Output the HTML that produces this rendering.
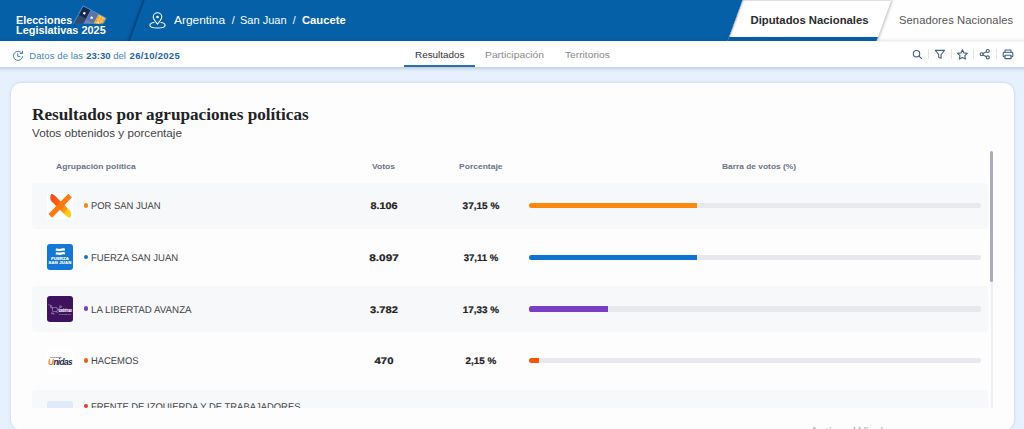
<!DOCTYPE html>
<html lang="es">
<head>
<meta charset="utf-8">
<title>Elecciones Legislativas 2025</title>
<style>
*{box-sizing:border-box;margin:0;padding:0}
html,body{width:1024px;height:429px;overflow:hidden}
body{background:#e7f1fd;font-family:"Liberation Sans",sans-serif;position:relative;color:#333}
.abs{position:absolute;white-space:nowrap;line-height:1}
#top{position:absolute;left:0;top:0;width:1024px;height:41px;background:#0560a8;overflow:hidden}
#top .skew{position:absolute;left:137px;top:-4px;width:700px;height:50px;background:#0560a8;transform:skewX(-20deg);box-shadow:-1.5px 0 2.5px rgba(0,25,60,.5)}
#tabs{position:absolute;left:700px;top:0;width:324px;height:41px;overflow:hidden}
#tabs .sen{position:absolute;left:150px;top:0;width:200px;height:41px;background:#fefefe}
#tabs .dip{position:absolute;left:34.6px;top:0;width:149.4px;height:41px;background:#fff;transform:skewX(-20deg);border-bottom:4px solid #0560a8;box-shadow:1px 0 3px rgba(0,0,0,.28),inset 2px 0 2px -1px rgba(0,0,0,.3),inset 0 1px 0 #e4e4e4}
#sub{position:absolute;left:0;top:41px;width:1024px;height:26px;background:#fff}
#subsh{position:absolute;left:-12px;top:41px;width:1048px;height:26px;background:#fff;box-shadow:0 1px 4px rgba(40,60,95,.3)}
#card{position:absolute;left:11px;top:83px;width:1003px;height:347px;background:#fdfdfe;border-radius:10px;box-shadow:0 0 3px rgba(90,120,170,.32)}
.stripe{position:absolute;left:32px;width:956px;height:46px;background:#f6f8fa;border-radius:4px}
.logo{position:absolute;left:47px;width:26.2px;height:26.200px;border-radius:3px;overflow:hidden}
.dot{position:absolute;left:83.5px;width:4.5px;height:4.5px;border-radius:50%}
.track{position:absolute;left:529px;width:451.5px;height:5.3px;background:#e8e9ed;border-radius:2.6px;overflow:hidden}
.fill{position:absolute;left:0;top:0;height:100%}
#list{position:absolute;left:0;top:150px;width:1024px;height:257.5px;overflow:hidden}
.vd{position:absolute;top:8px;width:1px;height:10px;background:#dfe3ea}
</style>
</head>
<body>
<div id="top">
<div class="skew"></div>
<div class="abs" style="top:16px;font-size:10.1px;color:#fff;left:16.00px;font-weight:bold;transform:translateY(0px) scale(1.065,1);transform-origin:left 80%;">Elecciones</div>
<div class="abs" style="top:26px;font-size:10.1px;color:#fff;left:16.00px;font-weight:bold;transform:translateY(0px) scale(1.08,1);transform-origin:left 80%;">Legislativas 2025</div>
<svg class="abs" style="left:70px;top:0" width="40" height="28" viewBox="70 0 40 28">
<defs><clipPath id="bc"><rect x="70" y="0" width="40" height="23.5"/></clipPath></defs>
<g clip-path="url(#bc)"><g transform="translate(83,5.200) rotate(28.300)">
<rect x="0" y="0" width="27" height="24" fill="#4a92dd"/>
<rect x=".9" y=".9" width="8.100" height="24" fill="#13284a"/>
<rect x="9.500" y=".9" width="8.100" height="24" fill="#5d74a3"/>
<rect x="18.100" y=".9" width="8" height="24" fill="#f5b53c"/>
<rect x=".9" y="10.500" width="8.100" height="14" fill="#4a5f86" opacity=".6"/>
<rect x="9.500" y="11" width="8.100" height="14" fill="#7f92bd" opacity=".6"/>
<rect x="18.100" y="3" width="8" height="1.200" fill="#f08a1e"/><rect x="18.100" y="6.500" width="8" height="1.200" fill="#f08a1e"/><rect x="18.100" y="10" width="8" height="1.200" fill="#f08a1e"/>
<rect x="20.300" y=".9" width="1" height="12" fill="#f9d27a"/><rect x="23.100" y=".9" width="1" height="12" fill="#f9d27a"/>
<rect x="3.800" y="5.300" width="2.300" height="2.300" fill="#f2f5fb"/>
<rect x="12.400" y="5.800" width="2.300" height="2.300" fill="#f2f5fb"/>
<rect x="21.200" y="7.500" width="1.800" height="1.800" fill="#fff6d8"/>
</g></g>
<path d="M76 24.300h6M99.500 24.300h4" stroke="#1f6fc4" stroke-width=".8" stroke-dasharray="1 .7"/>
</svg>
<svg class="abs" style="left:149px;top:11px" width="17" height="18" viewBox="0 0 17 18" fill="none" stroke="#fff" stroke-width="1.050" stroke-linecap="round" stroke-linejoin="round">
<path d="M8.500 13.100C5.800 10 4.200 8 4.200 6.100a4.300 4.300 0 0 1 8.600 0C12.800 8 11.200 10 8.500 13.100z"/>
<circle cx="8.500" cy="6" r=".800" fill="#fff"/>
<path d="M5 11.600C2.600 12 .9 13 .9 14.200c0 1.600 3.400 2.800 7.600 2.800s7.600-1.200 7.600-2.800c0-1.200-1.700-2.200-4.100-2.600"/>
</svg>
<div class="abs" style="top:15px;font-size:10.5px;color:#fff;left:174.20px;transform:translateY(0px) scale(1.135,1);transform-origin:left 80%;">Argentina</div>
<div class="abs" style="top:15px;font-size:10.5px;color:#fff;left:231.80px;">/</div>
<div class="abs" style="top:15px;font-size:10.5px;color:#fff;left:240.20px;transform:translateY(0px) scale(1.05,1);transform-origin:left 80%;">San Juan</div>
<div class="abs" style="top:15px;font-size:10.5px;color:#fff;left:292.80px;">/</div>
<div class="abs" style="top:15px;font-size:10.5px;color:#fff;left:301.50px;font-weight:bold;transform:translateY(0px) scale(1.07,1);transform-origin:left 80%;">Caucete</div>
</div>
<div id="tabs">
<div class="sen"></div>
<div class="dip"></div>
<div class="abs" style="top:15px;font-size:11.3px;color:#2b2b2b;left:50.50px;font-weight:bold;">Diputados Nacionales</div>
<div class="abs" style="top:15px;font-size:11.2px;color:#555;left:199.00px;letter-spacing:0.08px;">Senadores Nacionales</div>
</div>
<div id="subsh"></div>
<div id="sub">
<div class="abs" style="left:876px;top:0;width:148px;height:1px;background:#f5f5f5"></div>
<svg class="abs" style="left:12px;top:9px" width="12" height="12" viewBox="0 0 12 12" fill="none" stroke="#3f7fbd" stroke-width="1" stroke-linecap="round" stroke-linejoin="round">
<path d="M9.8 3.2A4.600 4.600 0 1 0 10.600 6.500"/><path d="M10.500 1.200v2.300H8.200"/><path d="M5.700 3.600v2.800h2.200"/></svg>
<div class="abs" style="top:10px;font-size:9.5px;color:#4583bf;left:29.20px;letter-spacing:0.1px;">Datos de las</div>
<div class="abs" style="top:10px;font-size:9.5px;color:#2463a5;left:86.30px;letter-spacing:-0.02px;font-weight:bold;">23:30</div>
<div class="abs" style="top:10px;font-size:9.5px;color:#4583bf;left:113.30px;">del</div>
<div class="abs" style="top:10px;font-size:9.5px;color:#2463a5;left:129.60px;letter-spacing:0.28px;font-weight:bold;">26/10/2025</div>
<div class="abs" style="top:9px;font-size:9.6px;color:#333;left:415.00px;transform:translateY(0px) scale(1.03,1);transform-origin:left 80%;">Resultados</div>
<div class="abs" style="left:404px;top:24px;width:71px;height:2px;background:#2a6db3"></div>
<div class="abs" style="top:9px;font-size:9.6px;color:#8a8a8a;left:484.90px;transform:translateY(0px) scale(1.075,1);transform-origin:left 80%;">Participación</div>
<div class="abs" style="top:9px;font-size:9.6px;color:#8a8a8a;left:565.30px;transform:translateY(0px) scale(1.065,1);transform-origin:left 80%;">Territorios</div>
<svg class="abs" style="left:910px;top:7px" width="106" height="14" viewBox="910 48 106 14" fill="none" stroke="#46607f" stroke-width="1.1" stroke-linecap="round" stroke-linejoin="round">
<circle cx="916.5" cy="53.7" r="3.2"/><path d="M918.9 56.100L921.600 58.500"/>
<path d="M935.300 50.400h9.200l-3.400 4.100v3.700l-2.400-1v-2.700z"/>
<path d="M962.400 49.800l1.500 3.100 3.400.45-2.500 2.350.65 3.350-3.050-1.650-3.050 1.650.65-3.350-2.500-2.350 3.400-.45z"/>
<circle cx="987.800" cy="51" r="1.500"/><circle cx="987.800" cy="57.400" r="1.500"/><circle cx="981.700" cy="54.200" r="1.500"/><path d="M983 53.500l3.500-1.800M983 54.900l3.500 1.800"/>
<path d="M1005 52.300v-2.300h6v2.300"/><rect x="1003.200" y="52.300" width="9.600" height="4.400" rx="1"/><rect x="1005" y="55.200" width="6" height="3.400" fill="#fff"/>
</svg>
<div class="vd" style="left:928px"></div>
<div class="vd" style="left:951px"></div>
<div class="vd" style="left:973px"></div>
<div class="vd" style="left:996px"></div>
</div>
<div id="card"></div>
<div class="abs" style="top:107px;font-size:16.3px;color:#222;left:32.00px;font-weight:bold;font-family:'Liberation Serif',serif;transform:translateY(0px) scale(1.054,1);transform-origin:left 80%;">Resultados por agrupaciones políticas</div>
<div class="abs" style="top:128px;font-size:10.5px;color:#444;left:32.00px;transform:translateY(0px) scale(1.112,1);transform-origin:left 80%;">Votos obtenidos y porcentaje</div>
<div class="abs" style="top:163px;font-size:8px;color:#6b7388;left:56.00px;font-weight:bold;transform:translateY(0px) scale(1.068,1);transform-origin:left 80%;">Agrupación política</div>
<div class="abs" style="top:163px;font-size:8px;color:#6b7388;left:372.00px;font-weight:bold;transform:translateY(0px) scale(1.065,1);transform-origin:left 80%;">Votos</div>
<div class="abs" style="top:163px;font-size:8px;color:#6b7388;left:458.60px;font-weight:bold;transform:translateY(0px) scale(1.064,1);transform-origin:left 80%;">Porcentaje</div>
<div class="abs" style="top:163px;font-size:8px;color:#6b7388;left:722.00px;font-weight:bold;transform:translateY(0px) scale(1.047,1);transform-origin:left 80%;">Barra de votos (%)</div>
<div id="list">
<div class="stripe" style="top:32.7px"></div>
<div class="stripe" style="top:136.1px"></div>
<div class="stripe" style="top:239.5px"></div>
<div class="logo" style="top:42.50px;background:#fff"><svg width="26" height="26" viewBox="0 0 26 26"><defs><linearGradient id="g1" x1="0" y1="0" x2="1" y2="1"><stop offset="0" stop-color="#ff3d1f"/><stop offset=".5" stop-color="#ff7014"/><stop offset=".7" stop-color="#ff9a18"/><stop offset=".74" stop-color="#ffc61a"/><stop offset="1" stop-color="#ffd61a"/></linearGradient></defs>
<g transform="translate(13.2,12.900) scale(1.140) translate(-13,-12.600)"><path d="M5.300 2c1.700.6 3 1.500 4.300 2.800L21.500 16.600c1.200 1.300 1.700 3.900.2 6.700-1.800-.6-3.200-1.500-4.400-2.700L5.500 8.800C4.200 7.500 3.800 4.600 5.300 2z" fill="url(#g1)"/>
<path d="M20.100 2l3.200 3.200L5.900 23l-3.200-3.200z" fill="#ff7a12"/></g></svg></div>
<div class="dot" style="top:53.00px;background:#ef8a1d"></div>
<div class="abs" style="top:51px;font-size:9.8px;color:#444;left:90.50px;transform:translateY(1.2px) scale(0.962,1);transform-origin:left 80%;text-rendering:geometricPrecision;">POR SAN JUAN</div>
<div class="abs" style="top:51px;font-size:9.5px;color:#222;left:283.50px;width:200px;text-align:center;font-weight:bold;transform:translateY(1.1px) scale(1.14,1);transform-origin:center 80%;text-rendering:geometricPrecision;-webkit-text-stroke:.2px #222;">8.106</div>
<div class="abs" style="top:51px;font-size:9.5px;color:#222;left:380.50px;width:200px;text-align:center;font-weight:bold;transform:translateY(1.1px) scale(1.055,1);transform-origin:center 80%;text-rendering:geometricPrecision;-webkit-text-stroke:.2px #222;">37,15 %</div>
<div class="track" style="top:53.00px"><div class="fill" style="width:168px;background:#fb890e"></div></div>
<div class="logo" style="top:94.20px;background:#1577d3"><svg width="26" height="26" viewBox="0 0 26 26"><path d="M8.800 4.700c1.500-.8 3.100.5 4.600.1s3.100-1 4.500-.2v2.300c-1.400-.8-3-.2-4.500.2s-3.100-.9-4.600-.1zM8.800 8.500c1.500-.8 3.100.5 4.600.1s3.100-1 4.500-.2v2.300c-1.400-.8-3-.2-4.500.2s-3.100-.9-4.600-.1z" fill="#fff"/>
<text x="13" y="15.900" font-family="Liberation Sans,sans-serif" font-weight="bold" font-size="4.200" fill="#fff" stroke="#fff" stroke-width=".15" text-anchor="middle" letter-spacing=".15">FUERZA</text>
<text x="13" y="20.300" font-family="Liberation Sans,sans-serif" font-weight="bold" font-size="4.200" fill="#fff" stroke="#fff" stroke-width=".15" text-anchor="middle" letter-spacing=".2">SAN JUAN</text></svg></div>
<div class="dot" style="top:104.70px;background:#1273c9"></div>
<div class="abs" style="top:103px;font-size:9.8px;color:#444;left:90.50px;transform:translateY(1.2px) scale(0.97,1);transform-origin:left 80%;text-rendering:geometricPrecision;">FUERZA SAN JUAN</div>
<div class="abs" style="top:103px;font-size:9.5px;color:#222;left:283.50px;width:200px;text-align:center;font-weight:bold;transform:translateY(1.1px) scale(1.24,1);transform-origin:center 80%;text-rendering:geometricPrecision;-webkit-text-stroke:.2px #222;">8.097</div>
<div class="abs" style="top:103px;font-size:9.5px;color:#222;left:380.50px;width:200px;text-align:center;font-weight:bold;transform:translateY(1.1px) scale(1.01,1);transform-origin:center 80%;text-rendering:geometricPrecision;-webkit-text-stroke:.2px #222;">37,11 %</div>
<div class="track" style="top:104.70px"><div class="fill" style="width:168px;background:#0f73cf"></div></div>
<div class="logo" style="top:145.90px;background:#3e125c"><svg width="26.2" height="26.2" viewBox="0 0 26 26"><g fill="none" stroke="#cdbbe0" stroke-width=".5" stroke-linecap="round" stroke-linejoin="round"><path d="M1.600 8.600l2.600 1 1.300 2.200 2.300-.5 2.300.4 1.800 1.900.9 2.300"/><path d="M5.500 11.800l-.3 2.300 1.200 1.300 2.500.2 1.700-1.200-.6-1.900"/><path d="M4.200 9.600l-1.100 1.600 2.100.9M5.200 15.600l-.7 2.300 2-.9.600 1.400M9 15.600l1.800.800M11.900 13.600l1-2.300 1.800-.6M12.900 11.300l-.3-1.600 1.500.4"/></g>
<text x="16" y="13.300" textLength="3.500" lengthAdjust="spacing" font-family="Liberation Sans,sans-serif" font-weight="bold" font-size="2" fill="#e6dcef">LA</text>
<text x="11.600" y="16.300" textLength="13.200" lengthAdjust="spacing" font-family="Liberation Sans,sans-serif" font-weight="bold" font-size="2.600" fill="#f1ebf6" stroke="#f1ebf6" stroke-width=".15">LIBERTAD</text>
<text x="12" y="18.900" textLength="11.900" lengthAdjust="spacing" font-family="Liberation Sans,sans-serif" font-weight="bold" font-size="2" fill="#b49dca" stroke="#b49dca" stroke-width=".1">AVANZA</text></svg></div>
<div class="dot" style="top:156.40px;background:#7b3fc0"></div>
<div class="abs" style="top:155px;font-size:9.8px;color:#444;left:90.50px;transform:translateY(1.2px) scale(0.995,1);transform-origin:left 80%;text-rendering:geometricPrecision;">LA LIBERTAD AVANZA</div>
<div class="abs" style="top:155px;font-size:9.5px;color:#222;left:283.50px;width:200px;text-align:center;font-weight:bold;transform:translateY(1.1px) scale(1.17,1);transform-origin:center 80%;text-rendering:geometricPrecision;-webkit-text-stroke:.2px #222;">3.782</div>
<div class="abs" style="top:155px;font-size:9.5px;color:#222;left:380.50px;width:200px;text-align:center;font-weight:bold;transform:translateY(1.1px) scale(1.04,1);transform-origin:center 80%;text-rendering:geometricPrecision;-webkit-text-stroke:.2px #222;">17,33 %</div>
<div class="track" style="top:156.40px"><div class="fill" style="width:78.5px;background:#7a3fc2"></div></div>
<div class="logo" style="top:197.60px;background:#fff"><svg width="26" height="26" viewBox="0 0 26 26"><defs><linearGradient id="g4" x1="0" y1="0" x2="1" y2="1"><stop offset="0" stop-color="#f7a21b"/><stop offset=".6" stop-color="#ee4a1e"/><stop offset="1" stop-color="#c2185b"/></linearGradient></defs>
<text x="3" y="9.700" font-family="Liberation Sans,sans-serif" font-weight="bold" font-size="2.300" fill="#3a3f55">Provincias</text>
<text x="1" y="16.600" font-family="Liberation Sans,sans-serif" font-weight="bold" font-style="italic" font-size="8.200" letter-spacing="-.55" fill="#1d2545"><tspan fill="url(#g4)">U</tspan>nidas</text></svg></div>
<div class="dot" style="top:208.10px;background:#f0601a"></div>
<div class="abs" style="top:206px;font-size:9.8px;color:#444;left:90.50px;transform:translateY(1.2px) scale(0.958,1);transform-origin:left 80%;text-rendering:geometricPrecision;">HACEMOS</div>
<div class="abs" style="top:206px;font-size:9.5px;color:#222;left:283.50px;width:200px;text-align:center;font-weight:bold;transform:translateY(1.1px) scale(1.19,1);transform-origin:center 80%;text-rendering:geometricPrecision;-webkit-text-stroke:.2px #222;">470</div>
<div class="abs" style="top:206px;font-size:9.5px;color:#222;left:380.50px;width:200px;text-align:center;font-weight:bold;transform:translateY(1.1px) scale(1.04,1);transform-origin:center 80%;text-rendering:geometricPrecision;-webkit-text-stroke:.2px #222;">2,15 %</div>
<div class="track" style="top:208.10px"><div class="fill" style="width:10px;background:#fb5607"></div></div>
<div class="logo" style="top:251px;background:#e1eaf9"></div>
<div class="dot" style="top:253.500px;background:#e5392f"></div>
<div class="abs" style="top:252px;font-size:9.8px;color:#444;left:90.50px;transform:translateY(1.2px) scale(0.962,1);transform-origin:left 80%;text-rendering:geometricPrecision;">FRENTE DE IZQUIERDA Y DE TRABAJADORES</div>
</div>
<div class="abs" style="left:990.5px;top:152px;width:2.5px;height:255.5px;background:#eceef3"></div>
<div class="abs" style="left:990px;top:151.2px;width:3.3px;height:130.5px;background:#a9abba;border-radius:2px"></div>
<div class="abs" style="top:426px;font-size:16px;color:#b4b6bc;left:810.20px;transform:translateY(0px) scale(0.815,1);transform-origin:left 80%;">Activar Windows</div>
</body>
</html>
